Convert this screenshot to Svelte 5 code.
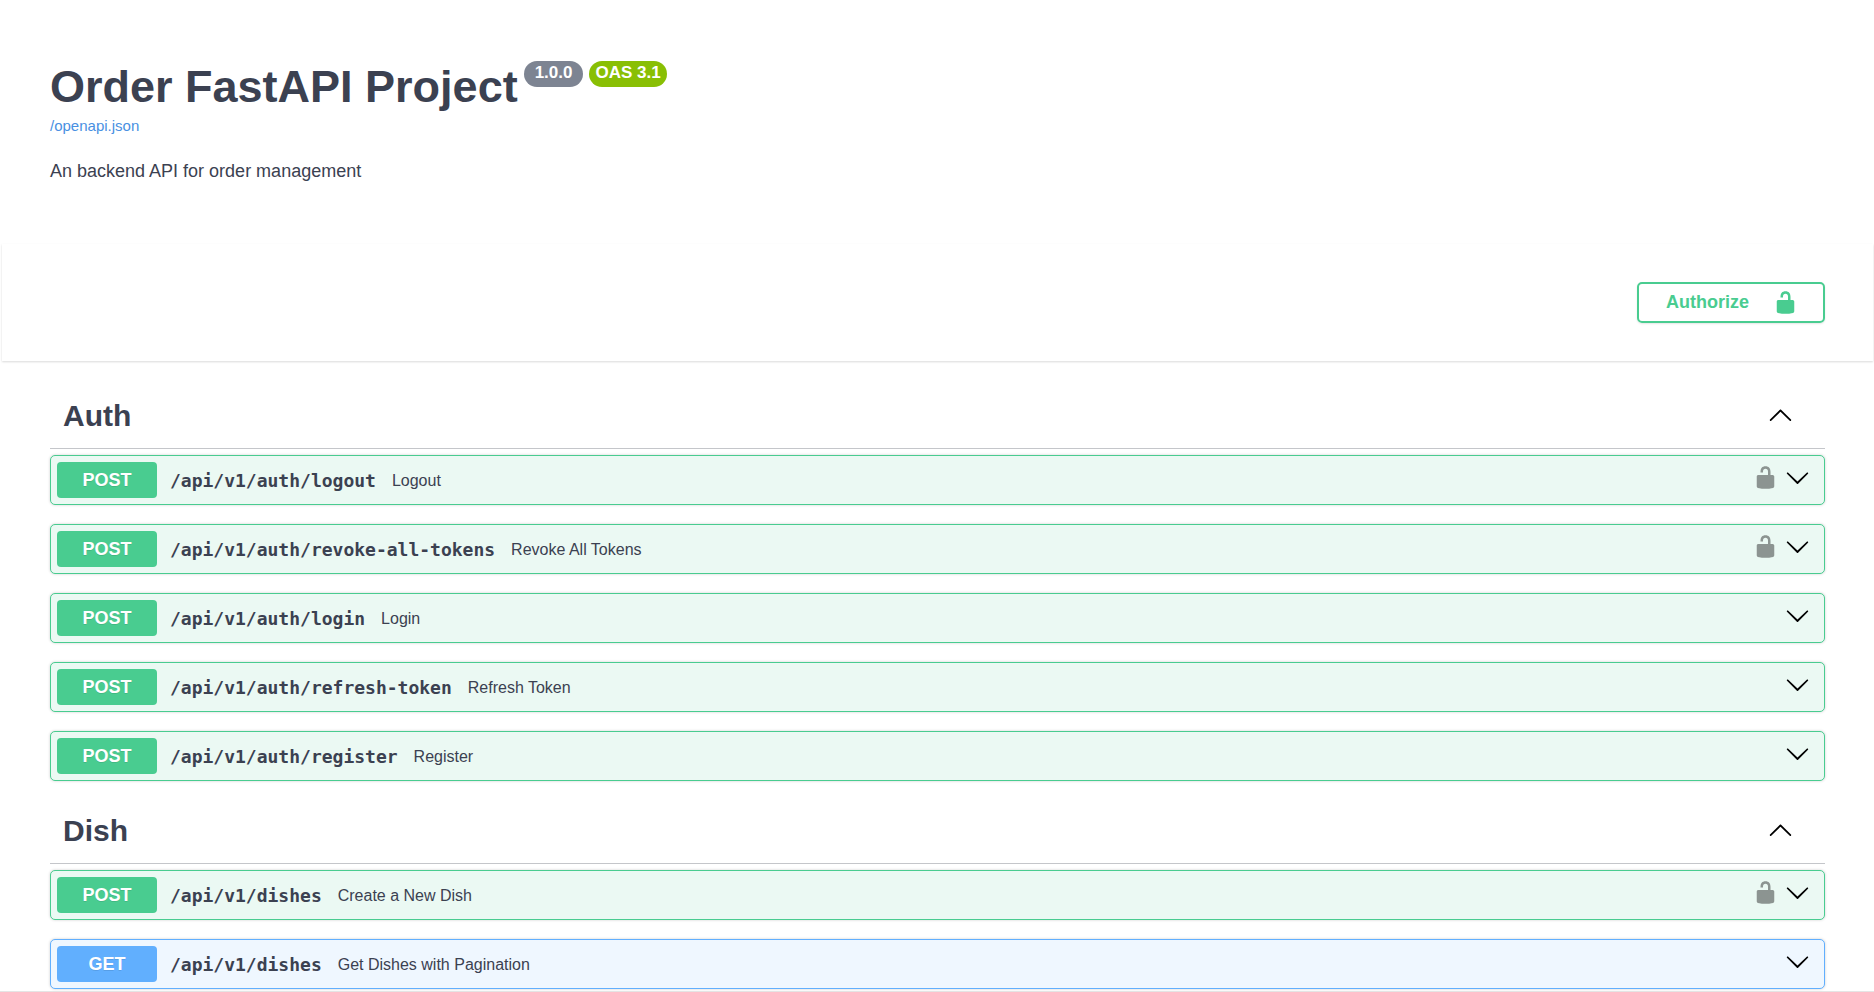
<script lang="ts">
    interface Operation {
        method: "post" | "get";
        path: string;
        summary: string;
        secured?: boolean;
    }

    interface Tag {
        name: string;
        open: boolean;
        operations: Operation[];
    }

    let tags: Tag[] = $state([
        {
            name: "Auth",
            open: true,
            operations: [
                { method: "post", path: "/api/v1/auth/logout", summary: "Logout", secured: true },
                { method: "post", path: "/api/v1/auth/revoke-all-tokens", summary: "Revoke All Tokens", secured: true },
                { method: "post", path: "/api/v1/auth/login", summary: "Login" },
                { method: "post", path: "/api/v1/auth/refresh-token", summary: "Refresh Token" },
                { method: "post", path: "/api/v1/auth/register", summary: "Register" },
            ],
        },
        {
            name: "Dish",
            open: true,
            operations: [
                { method: "post", path: "/api/v1/dishes", summary: "Create a New Dish", secured: true },
                { method: "get", path: "/api/v1/dishes", summary: "Get Dishes with Pagination" },
            ],
        },
    ]);
</script>

{#snippet unlocked()}
    <svg class="icon" viewBox="0 0 20 20" aria-hidden="true">
        <path
            d="M15.8 8H14V5.6C14 2.703 12.665 1 10 1 7.334 1 6 2.703 6 5.6V6h2v-.801C8 3.754 8.797 3 10 3c1.203 0 2 .754 2 2.199V8H4c-.553 0-1 .646-1 1.199V17c0 .549.428 1.139.951 1.307l1.197.387C5.672 18.861 6.55 19 7.1 19h5.8c.549 0 1.428-.139 1.951-.307l1.196-.387c.524-.167.953-.757.953-1.306V9.199C17 8.646 16.352 8 15.8 8z"
        />
    </svg>
{/snippet}

{#snippet arrow(up: boolean)}
    <svg class="icon" viewBox="0 0 20 20" aria-hidden="true">
        {#if up}
            <path
                d="M17.418 14.908c.272.268.709.268.979 0s.271-.701 0-.969l-7.908-7.83c-.27-.268-.707-.268-.979 0l-7.908 7.83c-.27.268-.27.701 0 .969.271.268.709.268.979 0L10 7.767l7.418 7.141z"
            />
        {:else}
            <path
                d="M17.418 6.109c.272-.268.709-.268.979 0s.271.701 0 .969l-7.908 7.83c-.27.268-.707.268-.979 0l-7.908-7.83c-.27-.268-.27-.701 0-.969.271-.268.709-.268.979 0L10 13.25l7.418-7.141z"
            />
        {/if}
    </svg>
{/snippet}

<div class="page">
    <header class="info">
        <div class="title-row">
            <h1>Order FastAPI Project</h1>
            <span class="version">1.0.0</span>
            <span class="version oas">OAS 3.1</span>
        </div>
        <a class="spec-link" href="/openapi.json">/openapi.json</a>
        <p>An backend API for order management</p>
    </header>

    <section class="scheme">
        <button class="authorize">
            <span>Authorize</span>
            {@render unlocked()}
        </button>
    </section>

    <main>
        {#each tags as tag (tag.name)}
            <section class="tag">
                <div class="tag-header">
                    <h2>{tag.name}</h2>
                    <button
                        class="plain"
                        aria-expanded={tag.open}
                        aria-label="Toggle {tag.name}"
                        onclick={() => (tag.open = !tag.open)}
                    >
                        {@render arrow(tag.open)}
                    </button>
                </div>
                {#if tag.open}
                    <div class="operations">
                        {#each tag.operations as op}
                            <div class="operation {op.method}">
                                <button class="plain summary">
                                    <span class="method">{op.method.toUpperCase()}</span>
                                    <span class="path">{op.path}</span>
                                    <span class="description">{op.summary}</span>
                                </button>
                                <div class="controls">
                                    {#if op.secured}
                                        <button class="plain lock" aria-label="Authorization for {op.path}">
                                            {@render unlocked()}
                                        </button>
                                    {/if}
                                    <button class="plain" aria-label="Expand {op.path}">
                                        {@render arrow(false)}
                                    </button>
                                </div>
                            </div>
                        {/each}
                    </div>
                {/if}
            </section>
        {/each}
    </main>
</div>

<style>
    :global(body) {
        background: #fff;
    }

    .page {
        box-sizing: border-box;
        min-height: 100vh;
        border-bottom: 1px solid #e5e5e5;
        font-family: "Liberation Sans", Arial, sans-serif;
        color: #3b4151;
    }

    h1,
    h2,
    p {
        margin: 0;
    }

    button {
        font-family: inherit;
        color: inherit;
        cursor: pointer;
    }

    .plain {
        display: flex;
        padding: 0;
        border: 0;
        background: none;
    }

    .icon {
        display: block;
        width: 25px;
        height: 25px;
    }

    .info {
        padding: 61px 50px 63px;
    }

    .title-row {
        display: flex;
        align-items: flex-start;
        gap: 6px;
        margin-bottom: 4px;
    }

    h1 {
        font-size: 45px;
        line-height: 52px;
    }

    .version {
        padding: 0 11px 2px;
        border-radius: 13px;
        background: #7d8492;
        color: #fff;
        font-size: 17px;
        font-weight: bold;
        line-height: 24px;
    }

    .version.oas {
        padding: 0 6px 2px;
        background: #89bf04;
    }

    .spec-link {
        display: block;
        width: fit-content;
        color: #4990e2;
        font-size: 15px;
        line-height: 18px;
        text-decoration: none;
    }

    .info p {
        margin-top: 26px;
        font-size: 18px;
        line-height: 20px;
    }

    .scheme {
        display: flex;
        justify-content: flex-end;
        margin: 0 1px 0 2px;
        padding: 38px 48px;
        background: #fff;
        box-shadow: 0 1px 2px rgba(0, 0, 0, 0.15);
    }

    .authorize {
        display: flex;
        align-items: center;
        gap: 24px;
        padding: 6px 25px 6px 27px;
        border: 2px solid #49cc90;
        border-radius: 5px;
        background: transparent;
        box-shadow: 0 1px 2px rgba(0, 0, 0, 0.1);
        color: #49cc90;
        font-size: 18px;
        font-weight: bold;
        line-height: 25px;
        fill: #49cc90;
    }

    main {
        padding: 27px 49px 0 50px;
    }

    .tag + .tag {
        margin-top: 22px;
    }

    .tag-header {
        display: flex;
        align-items: flex-start;
        justify-content: space-between;
        margin-bottom: 6px;
        padding: 10px 32px 15px 13px;
        border-bottom: 1px solid rgba(59, 65, 81, 0.3);
    }

    .tag-header .plain {
        padding-top: 4px;
    }

    h2 {
        font-size: 30px;
        line-height: 35px;
    }

    .operations {
        display: flex;
        flex-direction: column;
        gap: 19px;
    }

    .operation {
        display: flex;
        align-items: center;
        padding: 6px;
        border: 1px solid;
        border-radius: 5px;
        box-shadow: 0 0 3px rgba(0, 0, 0, 0.19);
    }

    .operation.post {
        border-color: #49cc90;
        background: #ebf9f3;
    }

    .operation.get {
        border-color: #61affe;
        background: #eff7ff;
    }

    .summary {
        flex: 1;
        align-items: center;
        text-align: left;
    }

    .method {
        width: 100px;
        margin-right: 13px;
        border-radius: 4px;
        color: #fff;
        font-size: 18px;
        font-weight: bold;
        line-height: 36px;
        text-align: center;
        text-shadow: 0 1px 0 rgba(0, 0, 0, 0.1);
    }

    .post .method {
        background: #49cc90;
    }

    .get .method {
        background: #61affe;
    }

    .path {
        margin-right: 16px;
        font-family: "DejaVu Sans Mono", monospace;
        font-size: 18px;
        font-weight: bold;
    }

    .description {
        padding-top: 1px;
        font-size: 16px;
    }

    .controls {
        display: flex;
        gap: 7px;
        padding: 0 8px 6px 0;
    }

    .lock {
        opacity: 0.4;
    }
</style>
